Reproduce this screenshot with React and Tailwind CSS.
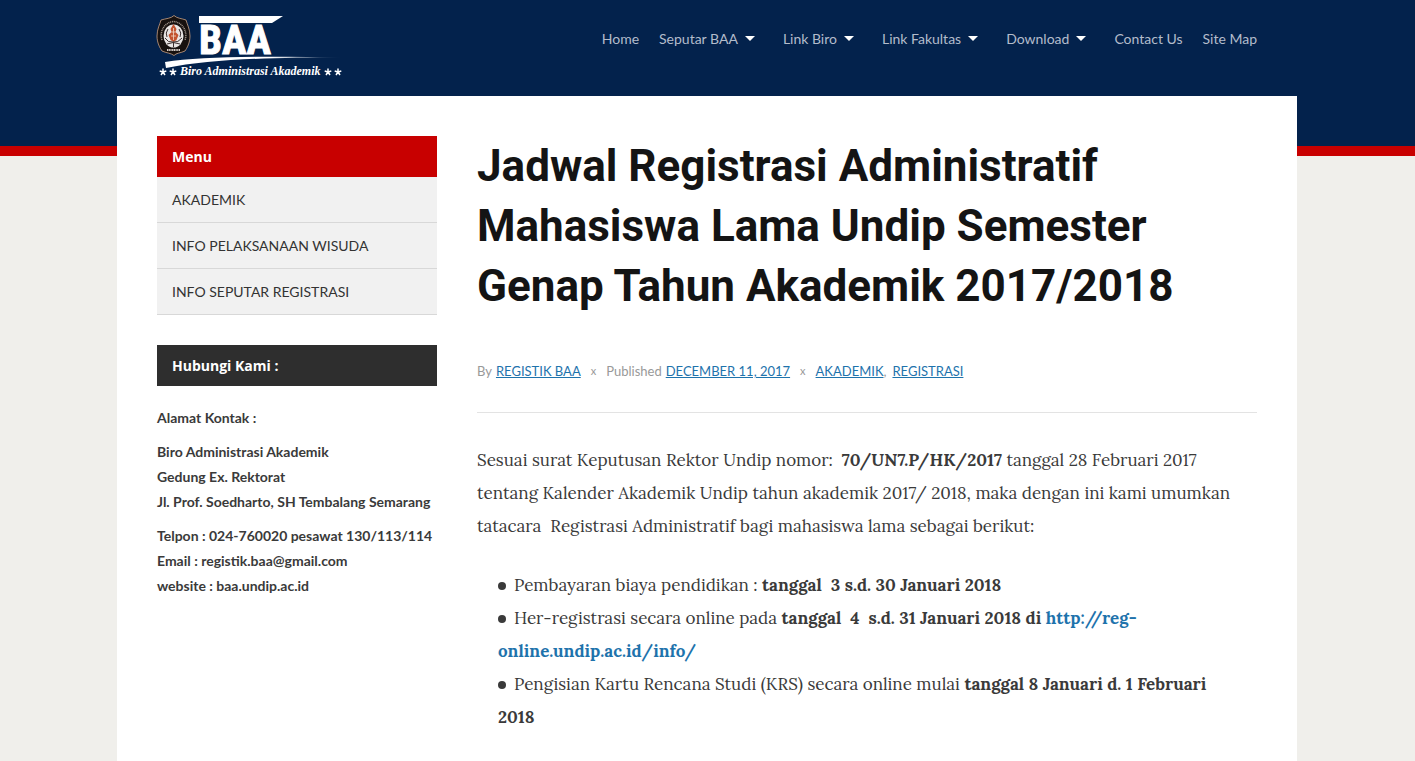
import clsx from 'clsx';

const NAV_ITEMS = [
  { label: 'Home' },
  { label: 'Seputar BAA', hasMenu: true },
  { label: 'Link Biro', hasMenu: true },
  { label: 'Link Fakultas', hasMenu: true },
  { label: 'Download', hasMenu: true },
  { label: 'Contact Us' },
  { label: 'Site Map' },
];

const MENU_ITEMS = ['AKADEMIK', 'INFO PELAKSANAAN WISUDA', 'INFO SEPUTAR REGISTRASI'];

const STARS = [163, 173, 328, 338];

function Logo() {
  return (
    <svg width="190" height="64" viewBox="155 14 190 64" role="img" aria-label="BAA Biro Administrasi Akademik">
      <defs>
        <linearGradient id="swoosh" x1="0" x2="1" y1="0" y2="0">
          <stop offset="0" stopColor="#fff" />
          <stop offset="0.6" stopColor="#fff" />
          <stop offset="1" stopColor="#fff" stopOpacity="0" />
        </linearGradient>
      </defs>

      {/* Crest */}
      <path
        d="M174 15.5 C177 18.5 182 18.5 186 20 C187 24 190 29 190 36 C190 43 187 48 185 51 C181 53 176 53 174 55.5 C171 53 166 53 162 51 C160 48 157 43 157 36 C157 29 160 24 161 20 C166 18.5 171 18.5 174 15.5 Z"
        fill="#17110f"
        stroke="#c9a184"
        strokeWidth="0.8"
      />
      <path
        d="M162 40 C159 31 165 22 173.5 21.500 C182 22 188 31 185 40"
        fill="none"
        stroke="#a89c92"
        strokeWidth="1.500"
        strokeDasharray="1 0.8"
      />
      <ellipse cx="173.500" cy="36" rx="10" ry="11.500" fill="#e9e5e4" />
      <path d="M173.500 24 l3 5 l-1 3 l3 3 l-2 5 l-3 2 l-3 -2 l-2 -5 l3 -3 l-1 -3 Z" fill="#c2532f" />
      <path d="M173.500 28 v12 M171.500 32 h4 M171 36 h5" stroke="#f3d9c8" strokeWidth="0.8" />
      <path
        d="M168 29 q-3 4 -1 8 M179 29 q3 4 1 8 M165 38 q3 5 8 4 q5 1 9 -4 M167 44 q6 -3 13 0 M173.500 42 v5"
        fill="none"
        stroke="#3b3030"
        strokeWidth="1"
      />
      <path d="M167 50 h13" stroke="#d8d0cb" strokeWidth="1.800" strokeDasharray="1.200 0.500" />

      {/* Wordmark */}
      <text
        x="199"
        y="54"
        fill="#fff"
        stroke="#fff"
        strokeWidth="1"
        fontFamily="'Liberation Sans Narrow', 'Roboto Condensed', 'Liberation Sans', sans-serif"
        fontWeight="700"
        fontSize="41"
      >
        BAA
      </text>
      <path d="M199 16 H283 L272 23 H199 Z" fill="#fff" />
      <path d="M165 62 C200 56.500 260 56 343 57.500 C270 57.500 210 59 166 68 Z" fill="url(#swoosh)" />
      <text
        x="180"
        y="75"
        fill="#fff"
        fontFamily="'Liberation Serif', serif"
        fontStyle="italic"
        fontWeight="700"
        fontSize="12"
      >
        Biro Administrasi Akademik
      </text>
      {STARS.map((x) => (
        <path
          key={x}
          transform={`translate(${x} 72)`}
          d="M0 0 V-3.500 M0 0 L3.300 -1 M0 0 L2 3 M0 0 L-2 3 M0 0 L-3.300 -1"
          stroke="#fff"
          strokeWidth="1.500"
        />
      ))}
    </svg>
  );
}

function Caret() {
  return (
    <svg width="10" height="5" viewBox="0 0 10 5" className="mr-2 mb-1 ml-[7px] inline-block" aria-hidden="true">
      <path d="M0 0 H10 L5 5 Z" fill="#fff" />
    </svg>
  );
}

function Header() {
  return (
    <header className="h-[156px] border-b-10 border-[#c80000] bg-[#03224c] pr-px">
      <div className="mx-auto flex max-w-[1180px] items-start justify-between px-10">
        <a href="#" className="-ml-0.5 mt-3.5 block">
          <Logo />
        </a>
        <nav className="mt-7">
          <ul className="flex gap-5 text-sm leading-[22px] text-[#b3bccb]">
            {NAV_ITEMS.map((item) => (
              <li key={item.label}>
                <a href="#">
                  {item.label}
                  {item.hasMenu && <Caret />}
                </a>
              </li>
            ))}
          </ul>
        </nav>
      </div>
    </header>
  );
}

function WidgetTitle({ children, className }) {
  return (
    <h2 className={clsx("px-[15px] font-['Open_Sans',sans-serif] text-sm leading-[41px] font-bold text-white", className)}>
      {children}
    </h2>
  );
}

function Sidebar() {
  return (
    <aside className="w-[280px] shrink-0">
      <WidgetTitle className="bg-[#c80000]">Menu</WidgetTitle>
      <ul className="mb-[30px] bg-[#f1f1f1] text-sm text-[#333]">
        {MENU_ITEMS.map((item) => (
          <li key={item} className="border-b border-[#d8d8d8]">
            <a href="#" className="block px-[15px] leading-[45px]">{item}</a>
          </li>
        ))}
      </ul>

      <WidgetTitle className="bg-[#2e2e2e]">Hubungi Kami :</WidgetTitle>
      <div className="mt-[19px] space-y-[9px] text-sm leading-[25px] font-bold text-[#3a3a3a]">
        <p>Alamat Kontak :</p>
        <p>
          Biro Administrasi Akademik<br />
          Gedung Ex. Rektorat<br />
          Jl. Prof. Soedharto, SH Tembalang Semarang
        </p>
        <p>
          Telpon : 024-760020 pesawat 130/113/114<br />
          Email : registik.baa@gmail.com<br />
          website : baa.undip.ac.id
        </p>
      </div>
    </aside>
  );
}

function MetaLink({ children }) {
  return (
    <a href="#" className="text-[#1e73ac] underline">{children}</a>
  );
}

function MetaSeparator() {
  return <span className="mx-2.5 text-[11px]">x</span>;
}

function Bullet() {
  return <span className="mr-2 mb-0.5 inline-block size-2 rounded-full bg-[#3a3a3a] align-middle" />;
}

function Article() {
  return (
    <article className="min-w-0 flex-1">
      <h1 className="font-[Roboto,sans-serif] text-[44px] leading-[60px] font-bold text-[#141414]">
        Jadwal Registrasi Administratif Mahasiswa Lama Undip Semester Genap Tahun Akademik 2017/2018
      </h1>

      <div className="mt-[45px] flex border-b border-[#e3e3e3] pb-[31px] text-[13px] leading-5 text-[#999]">
        <span className="mr-1">By</span>
        <MetaLink>REGISTIK BAA</MetaLink>
        <MetaSeparator />
        <span className="mr-1">Published</span>
        <MetaLink>DECEMBER 11, 2017</MetaLink>
        <MetaSeparator />
        <MetaLink>AKADEMIK</MetaLink>
        <span className="mr-1.5">,</span>
        <MetaLink>REGISTRASI</MetaLink>
      </div>

      <div className="mt-[31px] font-['Lora','Liberation_Serif',serif] text-[17px] leading-[33px] text-[#3a3a3a]">
        <p>
          Sesuai surat Keputusan Rektor Undip nomor:&nbsp; <strong>70/UN7.P/HK/2017</strong> tanggal 28 Februari 2017
          tentang Kalender Akademik Undip tahun akademik 2017/ 2018, maka dengan ini kami umumkan
          tatacara&nbsp; Registrasi Administratif bagi mahasiswa lama sebagai berikut:
        </p>
        <ul className="mt-[26px] px-[21px]">
          <li>
            <Bullet />
            Pembayaran biaya pendidikan : <strong>tanggal&nbsp; 3 s.d. 30 Januari 2018</strong>
          </li>
          <li>
            <Bullet />
            Her-registrasi secara online pada{' '}
            <strong>
              tanggal&nbsp; 4&nbsp; s.d. 31 Januari 2018 di{' '}
              <a href="#" className="text-[#1e73ac]">http://reg-online.undip.ac.id/info/</a>
            </strong>
          </li>
          <li>
            <Bullet />
            Pengisian Kartu Rencana Studi (KRS) secara online mulai{' '}
            <strong>tanggal 8 Januari d. 1 Februari 2018</strong>
          </li>
        </ul>
      </div>
    </article>
  );
}

export default function App() {
  return (
    <div className="flex min-h-screen flex-col bg-[#f0efeb] font-[Lato,sans-serif]">
      <Header />
      <div className="-mt-[60px] flex flex-1 justify-center pr-px">
        <main className="flex w-full max-w-[1180px] gap-10 bg-white px-10 pt-10">
          <Sidebar />
          <Article />
        </main>
      </div>
    </div>
  );
}
